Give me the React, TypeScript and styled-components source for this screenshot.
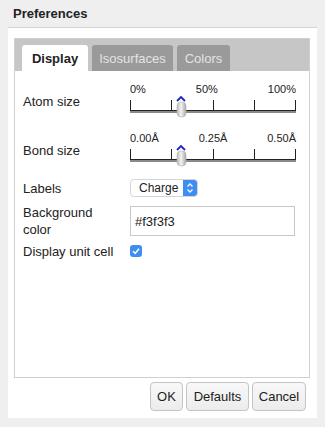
import styled, { createGlobalStyle } from 'styled-components';

const Global = createGlobalStyle`
  html, body {
    margin: 0;
    padding: 0;
    background: #efefef;
    font-family: 'Liberation Sans', Arial, sans-serif;
    color: #222;
  }
`;

const Dialog = styled.div`
  width: 325px;
  height: 427px;
  display: flex;
  flex-direction: column;
  box-sizing: border-box;
`;

const TitleBar = styled.div`
  height: 27px;
  margin: 0 8px;
  padding-left: 5px;
  display: flex;
  align-items: center;
  font-weight: bold;
  font-size: 13px;
  border-bottom: 1px solid #d2d2d2;
`;

const Body = styled.div`
  background: #fff;
  margin: 0 8px;
  padding: 10px 7px 0 6px;
  height: 390px;
  box-sizing: border-box;
  display: flex;
  flex-direction: column;
`;

const Panel = styled.div`
  border: 1px solid #cfcfcf;
  height: 340px;
  box-sizing: border-box;
  display: flex;
  flex-direction: column;
`;

const TabBar = styled.div`
  background: #c6c6c6;
  height: 32px;
  padding: 6px 0 0 7px;
  box-sizing: border-box;
  display: flex;
  gap: 4px;
`;

const Tab = styled.div<{ $active?: boolean; $w: number }>`
  width: ${(p) => p.$w}px;
  height: 26px;
  box-sizing: border-box;
  border-radius: 3px 3px 0 0;
  display: flex;
  align-items: center;
  justify-content: center;
  font-size: 13px;
  font-weight: ${(p) => (p.$active ? 'bold' : 'normal')};
  background: ${(p) => (p.$active ? '#fff' : '#9a9a9a')};
  color: ${(p) => (p.$active ? '#222' : '#e4e4e4')};
`;

const Content = styled.div`
  padding: 12px 12px 0 8px;
  display: grid;
  grid-template-columns: 107px 1fr;
  grid-template-rows: 49px 41px 30px 36px 24px;
  align-items: center;
  font-size: 13px;
`;

const Label = styled.div<{ $h: number; $top?: boolean }>`
  height: ${(p) => p.$h}px;
  align-self: ${(p) => (p.$top ? 'start' : 'center')};
  display: flex;
  align-items: center;
  line-height: 17px;
`;

const Slider = styled.div`
  width: 166px;
  align-self: start;
  display: flex;
  flex-direction: column;
`;

const Scale = styled.div`
  display: flex;
  justify-content: space-between;
  font-size: 11px;
  height: 15px;
  line-height: 13px;
`;

const Rail = styled.div`
  position: relative;
  height: 14px;
  margin-top: 2px;
`;

const Ticks = styled.div`
  display: flex;
  justify-content: space-between;
  height: 10px;
`;

const Tick = styled.div`
  width: 1px;
  height: 10px;
  background: #222;
`;

const Track = styled.div`
  height: 2px;
  border-top: 1px solid #222;
  background: #8a8a8a;
`;

const Thumb = styled.div`
  position: absolute;
  top: -6px;
  width: 14px;
  height: 24px;
`;

const Select = styled.div`
  width: 68px;
  height: 18px;
  box-sizing: border-box;
  border: 1px solid #d4d4d4;
  border-radius: 4px;
  display: flex;
  font-size: 12px;
  overflow: hidden;
  background: #fff;
`;

const SelectText = styled.div`
  flex: 1;
  padding-left: 8px;
  display: flex;
  align-items: center;
`;

const SelectArrow = styled.div`
  width: 14px;
  background: #3d8ef0;
  display: flex;
  align-items: center;
  justify-content: center;
`;

const TextInput = styled.div`
  width: 165px;
  height: 30px;
  box-sizing: border-box;
  border: 1px solid #c8c8c8;
  display: flex;
  align-items: center;
  padding-left: 4px;
  font-size: 13px;
`;

const Check = styled.div`
  width: 12px;
  height: 12px;
  border-radius: 3px;
  background: #3d8ef0;
  display: flex;
  align-items: center;
  justify-content: center;
`;

const Buttons = styled.div`
  display: flex;
  justify-content: flex-end;
  gap: 3px;
  padding: 4px 4px 0 0;
`;

const Button = styled.div<{ $w: number }>`
  width: ${(p) => p.$w}px;
  height: 29px;
  box-sizing: border-box;
  border: 1px solid #c4c4c4;
  border-radius: 4px;
  background: linear-gradient(#f8f8f8, #ececec);
  display: flex;
  align-items: center;
  justify-content: center;
  font-size: 13px;
`;

function Knob() {
  return (
    <svg width="14" height="24" viewBox="0 0 14 24">
      <defs>
        <linearGradient id="kg" x1="0" x2="1" y1="0" y2="0">
          <stop offset="0" stopColor="#b8b8b8" />
          <stop offset="0.45" stopColor="#f4f4f4" />
          <stop offset="1" stopColor="#a8a8a8" />
        </linearGradient>
      </defs>
      <path d="M3 7 L7 3 L11 7" fill="none" stroke="#1c25c8" strokeWidth="1.8" />
      <rect x="3" y="8" width="9" height="15" rx="4" fill="url(#kg)" stroke="#b0b0b0" strokeWidth="0.6" />
    </svg>
  );
}

function ScaleSlider({ labels, value }: { labels: string[]; value: number }) {
  return (
    <Slider>
      <Scale>
        {labels.map((l) => (
          <span key={l}>{l}</span>
        ))}
      </Scale>
      <Rail>
        <Ticks>
          {[0, 1, 2, 3, 4].map((i) => (
            <Tick key={i} />
          ))}
        </Ticks>
        <Track />
        <Thumb style={{ left: `${value * 166 - 6}px` }}>
          <Knob />
        </Thumb>
      </Rail>
    </Slider>
  );
}

export default function App() {
  return (
    <>
      <Global />
      <Dialog>
        <TitleBar>Preferences</TitleBar>
        <Body>
          <Panel>
            <TabBar>
              <Tab $active $w={66}>Display</Tab>
              <Tab $w={81}>Isosurfaces</Tab>
              <Tab $w={53}>Colors</Tab>
            </TabBar>
            <Content>
              <Label $h={36} $top>Atom size</Label>
              <ScaleSlider labels={['0%', '50%', '100%']} value={0.3} />
              <Label $h={36} $top>Bond size</Label>
              <ScaleSlider labels={['0.00Å', '0.25Å', '0.50Å']} value={0.3} />
              <Label $h={28}>Labels</Label>
              <Select>
                <SelectText>Charge</SelectText>
                <SelectArrow>
                  <svg width="8" height="12" viewBox="0 0 8 12">
                    <path d="M1.5 4.5 L4 2 L6.5 4.5 M1.5 7.5 L4 10 L6.5 7.5" fill="none" stroke="#fff" strokeWidth="1.3" />
                  </svg>
                </SelectArrow>
              </Select>
              <Label $h={36}>Background<br />color</Label>
              <TextInput>#f3f3f3</TextInput>
              <Label $h={24}>Display unit cell</Label>
              <Check>
                <svg width="10" height="10" viewBox="0 0 10 10">
                  <path d="M2 5.2 L4.2 7.4 L8 2.8" fill="none" stroke="#fff" strokeWidth="1.6" />
                </svg>
              </Check>
            </Content>
          </Panel>
          <Buttons>
            <Button $w={33}>OK</Button>
            <Button $w={63}>Defaults</Button>
            <Button $w={54}>Cancel</Button>
          </Buttons>
        </Body>
      </Dialog>
    </>
  );
}
